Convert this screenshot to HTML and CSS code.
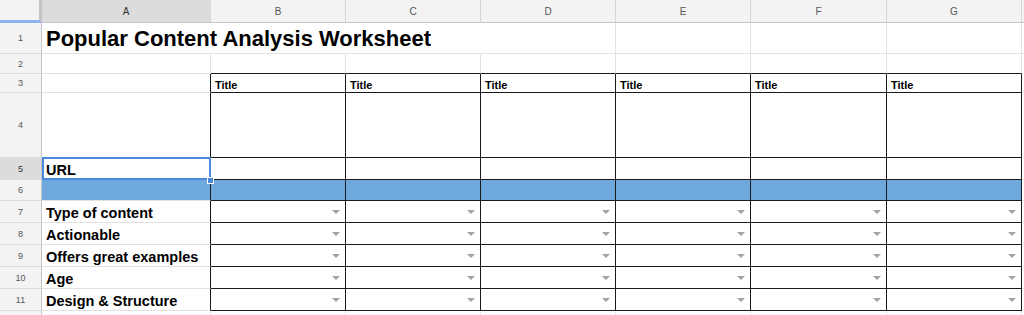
FILE: index.html
```html
<!DOCTYPE html>
<html lang="en">
<head>
    <meta charset="UTF-8">
    <meta name="viewport" content="width=device-width, initial-scale=1.0">
    <title>Popular Content Analysis Worksheet</title>
    <link rel="stylesheet" href="styles.css">
</head>
<body>
    <div class="sheet">
        <!-- column headers -->
        <div class="corner"></div>
        <div class="hd sel">A</div>
        <div class="hd">B</div>
        <div class="hd">C</div>
        <div class="hd">D</div>
        <div class="hd">E</div>
        <div class="hd">F</div>
        <div class="hd">G</div>
        <div class="hd"></div>

        <!-- row 1: title overflows into B and C, so no grid line there -->
        <div class="rh">1</div>
        <div class="c spill title">Popular Content Analysis Worksheet</div>
        <div class="c spill"></div><div class="c spill"></div><div class="c"></div><div class="c"></div><div class="c"></div><div class="c"></div><div class="c"></div>

        <!-- row 2 -->
        <div class="rh">2</div>
        <div class="c"></div>
        <div class="c bb"></div><div class="c bb"></div><div class="c bb"></div><div class="c bb"></div><div class="c bb"></div><div class="c bb"></div>
        <div class="c"></div>

        <!-- row 3 -->
        <div class="rh">3</div>
        <div class="c br"></div>
        <div class="c br bb head">Title</div>
        <div class="c br bb head">Title</div>
        <div class="c br bb head">Title</div>
        <div class="c br bb head">Title</div>
        <div class="c br bb head">Title</div>
        <div class="c br bb head">Title</div>
        <div class="c"></div>

        <!-- row 4 -->
        <div class="rh">4</div>
        <div class="c br"></div>
        <div class="c br bb"></div><div class="c br bb"></div><div class="c br bb"></div><div class="c br bb"></div><div class="c br bb"></div><div class="c br bb"></div>
        <div class="c"></div>

        <!-- row 5 -->
        <div class="rh sel">5</div>
        <div class="c br label active">URL</div>
        <div class="c br bb"></div><div class="c br bb"></div><div class="c br bb"></div><div class="c br bb"></div><div class="c br bb"></div><div class="c br bb"></div>
        <div class="c"></div>

        <!-- row 6 -->
        <div class="rh">6</div>
        <div class="c br fill"></div>
        <div class="c br bb fill"></div><div class="c br bb fill"></div><div class="c br bb fill"></div><div class="c br bb fill"></div><div class="c br bb fill"></div><div class="c br bb fill"></div>
        <div class="c"></div>

        <!-- row 7 -->
        <div class="rh">7</div>
        <div class="c br label">Type of content</div>
        <div class="c br bb dd"><span class="arrow"></span></div>
        <div class="c br bb dd"><span class="arrow"></span></div>
        <div class="c br bb dd"><span class="arrow"></span></div>
        <div class="c br bb dd"><span class="arrow"></span></div>
        <div class="c br bb dd"><span class="arrow"></span></div>
        <div class="c br bb dd"><span class="arrow"></span></div>
        <div class="c"></div>

        <!-- row 8 -->
        <div class="rh">8</div>
        <div class="c br label">Actionable</div>
        <div class="c br bb dd"><span class="arrow"></span></div>
        <div class="c br bb dd"><span class="arrow"></span></div>
        <div class="c br bb dd"><span class="arrow"></span></div>
        <div class="c br bb dd"><span class="arrow"></span></div>
        <div class="c br bb dd"><span class="arrow"></span></div>
        <div class="c br bb dd"><span class="arrow"></span></div>
        <div class="c"></div>

        <!-- row 9 -->
        <div class="rh">9</div>
        <div class="c br label">Offers great examples</div>
        <div class="c br bb dd"><span class="arrow"></span></div>
        <div class="c br bb dd"><span class="arrow"></span></div>
        <div class="c br bb dd"><span class="arrow"></span></div>
        <div class="c br bb dd"><span class="arrow"></span></div>
        <div class="c br bb dd"><span class="arrow"></span></div>
        <div class="c br bb dd"><span class="arrow"></span></div>
        <div class="c"></div>

        <!-- row 10 -->
        <div class="rh">10</div>
        <div class="c br label">Age</div>
        <div class="c br bb dd"><span class="arrow"></span></div>
        <div class="c br bb dd"><span class="arrow"></span></div>
        <div class="c br bb dd"><span class="arrow"></span></div>
        <div class="c br bb dd"><span class="arrow"></span></div>
        <div class="c br bb dd"><span class="arrow"></span></div>
        <div class="c br bb dd"><span class="arrow"></span></div>
        <div class="c"></div>

        <!-- row 11 -->
        <div class="rh">11</div>
        <div class="c br label">Design &amp; Structure</div>
        <div class="c br bb dd"><span class="arrow"></span></div>
        <div class="c br bb dd"><span class="arrow"></span></div>
        <div class="c br bb dd"><span class="arrow"></span></div>
        <div class="c br bb dd"><span class="arrow"></span></div>
        <div class="c br bb dd"><span class="arrow"></span></div>
        <div class="c br bb dd"><span class="arrow"></span></div>
        <div class="c"></div>

        <!-- row 12 (cut off at the bottom) -->
        <div class="rh"></div>
        <div class="c"></div><div class="c"></div><div class="c"></div><div class="c"></div><div class="c"></div><div class="c"></div><div class="c"></div><div class="c"></div>
    </div>
</body>
</html>
```

FILE: styles.css
```css
body {
    margin: 0;
    padding: 0;
    background-color: #fff;
    font-family: "Liberation Sans", Arial, sans-serif;
    overflow: hidden;
}

.sheet {
    display: grid;
    grid-template-columns: 42px 169px 135px 135px 135px 135px 136px 135px 100px;
    grid-template-rows: 23px 31px 20px 19px 65px 22px 21px 22px 22px 22px 22px 22px 22px;
    width: 1024px;
    height: 315px;
    overflow: hidden;
}

.sheet > div {
    box-sizing: border-box;
    min-width: 0;
}

/* headers */
.corner {
    background-color: #f3f3f3;
    border-right: 3px solid #c4c4c4;
    border-bottom: 3px solid #8fb3ee;
}

.hd {
    background-color: #f3f3f3;
    border-right: 1px solid #d6d6d6;
    border-bottom: 1px solid #c6c6c6;
    color: #555;
    font-size: 10px;
    display: flex;
    align-items: center;
    justify-content: center;
}

.rh {
    background-color: #f3f3f3;
    border-right: 1px solid #c6c6c6;
    border-bottom: 1px solid #dcdcdc;
    color: #555;
    font-size: 9px;
    display: flex;
    align-items: center;
    justify-content: center;
}

.hd.sel,
.rh.sel {
    background-color: #dcdcdc;
    color: #333;
}

/* cells */
.c {
    border-right: 1px solid #e2e2e2;
    border-bottom: 1px solid #e2e2e2;
    display: flex;
    align-items: flex-end;
    padding: 0 3px 1px 4px;
    white-space: nowrap;
    color: #000;
    font-weight: bold;
}

.c.spill {
    border-right-color: transparent;
}

.br {
    border-right: 1px solid #1a1a1a;
}

.bb {
    border-bottom: 1px solid #1a1a1a;
}

.fill {
    background-color: #6fa8dc;
}

.title {
    font-size: 22px;
    padding-bottom: 1px;
}

.label {
    font-size: 14.5px;
    padding-left: 4px;
}

.head {
    font-size: 11px;
    padding-left: 4px;
    padding-bottom: 1px;
}

/* selected cell A5 */
.active {
    position: relative;
    z-index: 1;
}

.active::after {
    content: "";
    position: absolute;
    top: -1px;
    left: 0;
    right: -1px;
    bottom: -1px;
    border: 2px solid #4a89dc;
}

.active::before {
    content: "";
    position: absolute;
    right: -4px;
    bottom: -5px;
    width: 5px;
    height: 5px;
    background-color: #4a89dc;
    border: 1px solid #fff;
    z-index: 2;
}

/* data validation dropdowns */
.dd {
    justify-content: flex-end;
    align-items: center;
    padding-right: 5px;
}

.arrow {
    width: 0;
    height: 0;
    margin-top: 2px;
    border-left: 4px solid transparent;
    border-right: 4px solid transparent;
    border-top: 4px solid #a3a3a3;
}
```
